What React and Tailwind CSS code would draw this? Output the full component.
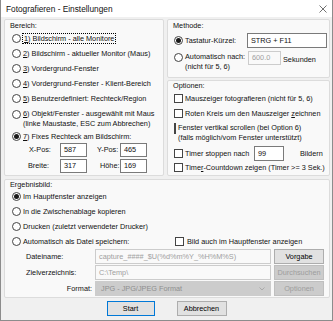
import React from "react";

function Radio({ checked }) {
  return (
    <span className="w-[9px] h-[9px] rounded-full border border-[#444444] bg-white shrink-0 flex items-center justify-center box-border">
      {checked && <span className="w-[5px] h-[5px] rounded-full bg-[#1a1a1a]" />}
    </span>
  );
}

function Check() {
  return <span className="w-[9px] h-[9px] border border-[#444444] bg-white shrink-0 box-border" />;
}

function Group({ className = "", children }) {
  return (
    <div className={"border border-[#dcdcdc] rounded-[2px] bg-[#f9f9f9] box-border flex flex-col " + className}>
      {children}
    </div>
  );
}

function Input({ w, value, disabled }) {
  return (
    <div
      className={
        "h-[14px] box-border border flex items-center pl-[3px] shrink-0 whitespace-nowrap overflow-hidden " +
        (disabled ? "border-[#cccccc] bg-[#f9f9f9] text-[#a0a0a0] " : "border-[#7a7a7a] bg-white ") +
        w
      }
    >
      {value}
    </div>
  );
}

function Btn({ children, kind, w }) {
  const cls =
    kind === "default"
      ? "border-[#0078d7] bg-[#e1e1e1] text-black"
      : kind === "disabled"
      ? "border-[#bfbfbf] bg-[#cccccc] text-[#9d9d9d]"
      : "border-[#adadad] bg-[#e1e1e1] text-black";
  return (
    <div className={"h-[15px] box-border border flex items-center justify-center shrink-0 " + cls + " " + w}>
      {children}
    </div>
  );
}

export default function App() {
  return (
    <div className="w-[333px] h-[321px] bg-[#f0f0f0] border-x border-b border-[#8c8c8c] box-border flex flex-col font-['Liberation_Sans',Arial,sans-serif] text-[7.3px] leading-[10px] text-[#111111] overflow-hidden">
      {/* title bar */}
      <div className="h-[17px] bg-white flex items-center justify-between pl-[5px] pr-[5px] shrink-0">
        <span className="text-[8.3px]">Fotografieren - Einstellungen</span>
        <svg width="8" height="8" viewBox="0 0 8 8">
          <path d="M0.5 0.5 L7.5 7.5 M7.5 0.5 L0.5 7.5" stroke="#333" strokeWidth="0.7" fill="none" />
        </svg>
      </div>

      {/* top row */}
      <div className="flex gap-[3px] pl-[3px] mt-[2px]">
        <Group className="w-[160px] h-[157px]">
          <div className="h-[11px] leading-[11px] pl-[5px]">Bereich:</div>
          <div className="flex flex-col pl-[7px]">
            <div className="h-[15px] flex items-center gap-[1px]">
              <Radio />
              <span className="border border-dotted border-black px-[1px] leading-[9px]">
                <u>1</u>) Bildschirm - alle Monitore
              </span>
            </div>
            <div className="h-[15px] flex items-center gap-[2px]">
              <Radio />
              <span>
                <u>2</u>) Bildschirm - aktueller Monitor (Maus)
              </span>
            </div>
            <div className="h-[15px] flex items-center gap-[2px]">
              <Radio />
              <span>
                <u>3</u>) Vordergrund-Fenster
              </span>
            </div>
            <div className="h-[15px] flex items-center gap-[2px]">
              <Radio />
              <span>
                <u>4</u>) Vordergrund-Fenster - Klient-Bereich
              </span>
            </div>
            <div className="h-[15px] flex items-center gap-[2px]">
              <Radio />
              <span>
                <u>5</u>) Benutzerdefiniert: Rechteck/Region
              </span>
            </div>
            <div className="h-[24px] pt-[3px] flex items-start gap-[2px]">
              <span className="mt-[0.5px]">
                <Radio />
              </span>
              <span className="leading-[10px]">
                <u>6</u>) Objekt/Fenster - ausgewählt mit Maus
                <br />
                (linke Maustaste, ESC zum Abbrechen)
              </span>
            </div>
            <div className="h-[13px] flex items-center gap-[2px]">
              <Radio checked />
              <span>
                <u>7</u>) Fixes Rechteck am Bildschirm:
              </span>
            </div>
          </div>
          <div className="h-[14px] flex items-center pl-[24px]">
            <span className="w-[31px]">X-Pos:</span>
            <Input w="w-[27px]" value="587" />
            <span className="w-[33px] pl-[10px]">Y-Pos:</span>
            <Input w="w-[27px]" value="465" />
          </div>
          <div className="h-[14px] flex items-center pl-[23px] mt-[2px]">
            <span className="w-[32px]">Breite:</span>
            <Input w="w-[27px]" value="317" />
            <span className="w-[33px] pl-[13px]">Höhe:</span>
            <Input w="w-[27px]" value="169" />
          </div>
        </Group>

        <div className="flex flex-col w-[163px]">
          <Group className="h-[59px]">
            <div className="h-[11px] leading-[11px] pl-[5px]">Methode:</div>
            <div className="mt-[2px] h-[15px] flex items-center pl-[6px] pr-[2px] gap-[2px]">
              <Radio checked />
              <span>Tastatur-Kürzel:</span>
              <div className="ml-auto h-[15px] w-[80px] box-border border border-[#7a7a7a] bg-white flex items-center pl-[3px]">
                STRG + F11
              </div>
            </div>
            <div className="mt-[3px] flex items-start pl-[6px]">
              <span className="mt-[1.5px]">
                <Radio />
              </span>
              <span className="ml-[2px] w-[63px] pt-[1px] whitespace-nowrap leading-[10px]">
                Automatisch nach:
                <br />
                (nicht für 5, 6)
              </span>
              <Input w="w-[33px]" value="600.0" disabled />
              <span className="ml-[2px] mt-[4px]">Sekunden</span>
            </div>
          </Group>

          <Group className="h-[96px] mt-[2px]">
            <div className="h-[10px] leading-[10px] pl-[5px]">Optionen:</div>
            <div className="flex flex-col pl-[6px]">
              <div className="h-[15px] flex items-center gap-[2px]">
                <Check />
                <span>Mauszeiger fotografieren (nicht für 5, 6)</span>
              </div>
              <div className="h-[15px] flex items-center gap-[2px]">
                <Check />
                <span>
                  Roten Kreis um den Mauszeiger <u>z</u>eichnen
                </span>
              </div>
              <div className="h-[22px] pt-[2px] flex items-start gap-[2px]">
                <span className="mt-[0.5px]">
                  <Check />
                </span>
                <span className="leading-[10px]">
                  Fenster vertikal scrollen (bei Option 6)
                  <br />
                  (falls möglich/vom Fenster unterstützt)
                </span>
              </div>
              <div className="mt-[3px] h-[15px] flex items-center">
                <Check />
                <span className="ml-[2px] w-[69px]">Timer stoppen nach</span>
                <div className="h-[15px] w-[30px] box-border border border-[#7a7a7a] bg-white flex items-center pl-[3px]">
                  99
                </div>
                <span className="pl-[16px]">Bildern</span>
              </div>
              <div className="h-[13px] flex items-center gap-[2px]">
                <Check />
                <span>
                  Time<u>r</u>-Countdown zeigen (Timer &gt;= 3 Sek.)
                </span>
              </div>
            </div>
          </Group>
        </div>
      </div>

      {/* Ergebnisbild */}
      <Group className="ml-[3px] mt-[3px] w-[326px] h-[119px]">
        <div className="h-[9px] leading-[9px] pl-[5px]">Ergebnisbild:</div>
        <div className="flex flex-col pl-[7px]">
          <div className="h-[15px] flex items-center gap-[2px]">
            <Radio checked />
            <span>Im Hauptfenster anzeigen</span>
          </div>
          <div className="h-[15px] flex items-center gap-[2px]">
            <Radio />
            <span>In die Zwischenablage kopieren</span>
          </div>
          <div className="h-[15px] flex items-center gap-[2px]">
            <Radio />
            <span>Drucken (zuletzt verwendeter Drucker)</span>
          </div>
          <div className="h-[15px] flex items-center">
            <div className="w-[163px] flex items-center gap-[2px]">
              <Radio />
              <span>Automatisch als Datei speichern:</span>
            </div>
            <Check />
            <span className="ml-[3px]">Bild auch im Hauptfenster anzeigen</span>
          </div>
        </div>
        <div className="h-[15px] flex items-center pl-[21px]">
          <span className="w-[69px]">Dateiname:</span>
          <Input w="w-[176px] h-[15px]" value="capture_####_$U(%d%m%Y_%H%M%S)" disabled />
          <span className="ml-[3px]">
            <Btn w="w-[50px]">Vorgabe</Btn>
          </span>
        </div>
        <div className="h-[15px] flex items-center pl-[21px] mt-[1px]">
          <span className="w-[69px]">Zielverzeichnis:</span>
          <Input w="w-[176px] h-[15px]" value="C:\Temp\" disabled />
          <span className="ml-[3px]">
            <Btn w="w-[50px]" kind="disabled">
              Durchsuchen
            </Btn>
          </span>
        </div>
        <div className="h-[15px] flex items-center pl-[21px] mt-[1px]">
          <span className="w-[69px] text-right pr-[3px]">Format:</span>
          <div className="w-[176px] h-[15px] box-border border border-[#cccccc] bg-[#cccccc] text-[#8f8f8f] flex items-center pl-[5px] pr-[5px]">
            <span className="flex-1">JPG - JPG/JPEG Format</span>
            <svg width="6" height="4" viewBox="0 0 6 4">
              <path d="M0.5 0.5 L3 3 L5.5 0.5" stroke="#a0a0a0" strokeWidth="0.8" fill="none" />
            </svg>
          </div>
          <span className="ml-[3px]">
            <Btn w="w-[50px]" kind="disabled">
              Optionen
            </Btn>
          </span>
        </div>
      </Group>

      {/* buttons */}
      <div className="mt-[3px] flex justify-center gap-[22px]">
        <Btn w="w-[48px]" kind="default">
          Start
        </Btn>
        <Btn w="w-[50px]">Abbrechen</Btn>
      </div>
    </div>
  );
}
